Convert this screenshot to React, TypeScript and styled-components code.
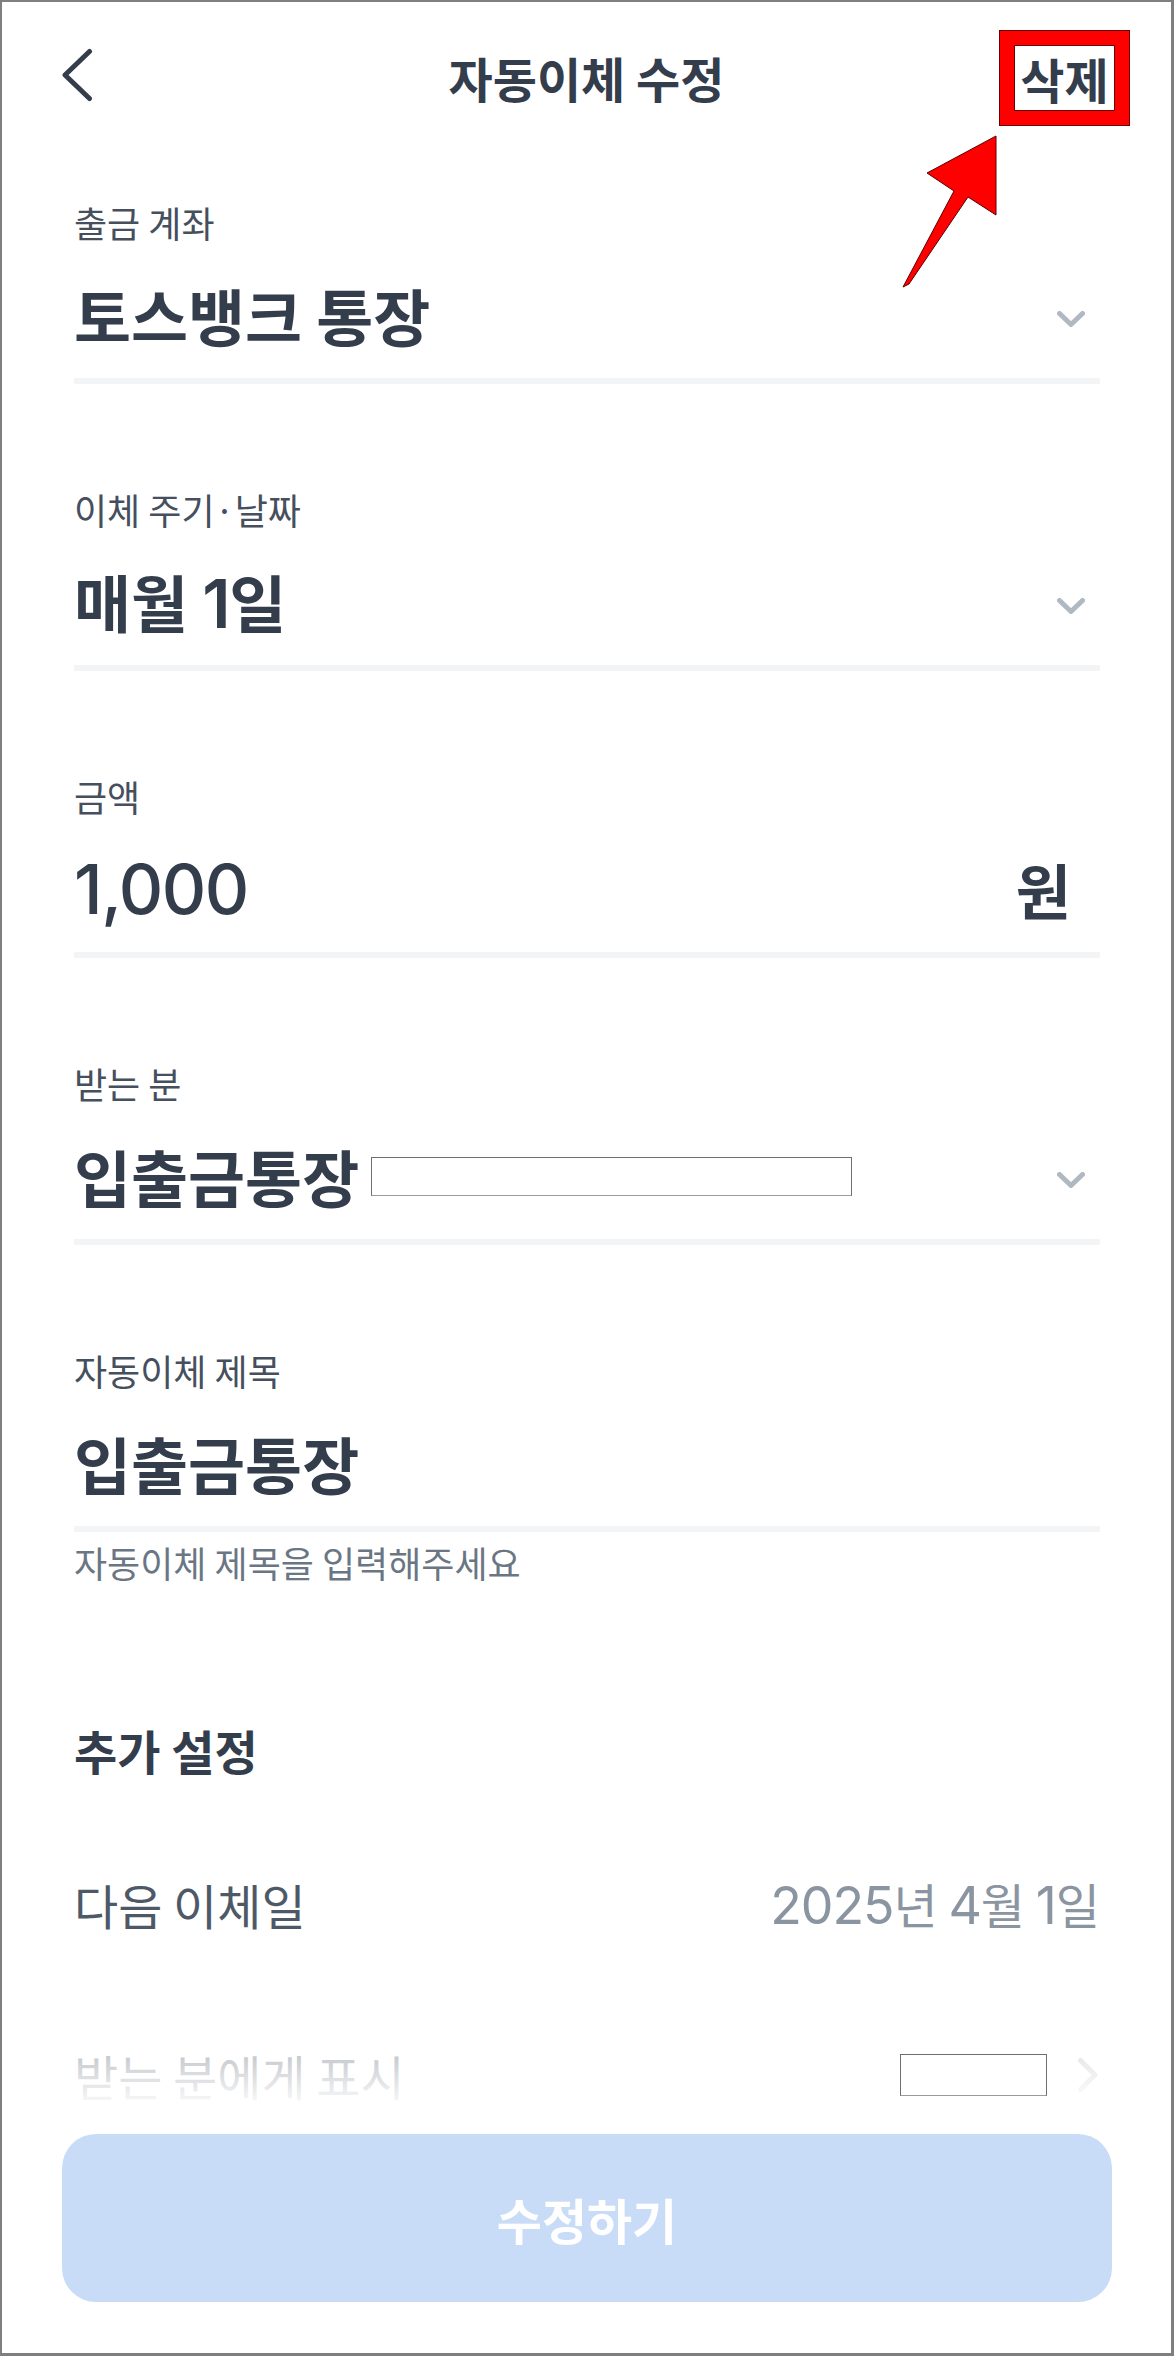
import styled, { createGlobalStyle } from 'styled-components';

const GlobalStyle = createGlobalStyle`
  html, body {
    margin: 0;
    padding: 0;
    background: #fff;
  }
  body {
    font-family: 'Noto Sans CJK KR', 'Noto Sans', sans-serif;
    color: #333d4b;
  }
  * {
    box-sizing: border-box;
  }
`;

const Screen = styled.div`
  position: relative;
  width: 1174px;
  height: 2356px;
  border-style: solid;
  border-color: #7f7f7f;
  border-width: 2px 3px 3px 2px;
  background: #fff;
  overflow: hidden;
  display: flex;
  flex-direction: column;
`;

const Header = styled.header`
  position: relative;
  height: 150px;
  flex-shrink: 0;
  display: grid;
  grid-template-columns: 1fr auto 1fr;
  align-items: center;
  padding: 0 42px;
`;

const BackButton = styled.button`
  justify-self: start;
  display: flex;
  margin-left: 17px;
  padding: 0;
  border: none;
  background: none;
  color: #333d4b;
`;

const Title = styled.h1`
  margin: 0;
  font-size: 48px;
  font-weight: 600;
  line-height: 60px;
  color: #333d4b;
`;

const DeleteButton = styled.button`
  justify-self: end;
  width: 129px;
  height: 94px;
  margin-top: 2px;
  padding: 0;
  background: #fff;
  border: 14px solid #ff0000;
  box-shadow: 0 0 0 1px #6a0000, inset 0 0 0 1px #6a0000;
  font-family: inherit;
  font-size: 48px;
  font-weight: 600;
  line-height: 1;
  color: #333d4b;
  white-space: nowrap;
`;

const Arrow = styled.svg`
  position: absolute;
  left: 893px;
  top: 126px;
  z-index: 3;
  pointer-events: none;
`;

const Form = styled.main`
  display: flex;
  flex-direction: column;
  gap: 101px;
  padding: 46px 71px 0 72px;
`;

const Field = styled.section`
  display: flex;
  flex-direction: column;
`;

const FieldLabel = styled.div`
  height: 48px;
  font-size: 36px;
  line-height: 48px;
  color: #454f5d;
`;

const ValueRow = styled.div`
  margin-top: 21px;
  height: 96px;
  display: flex;
  align-items: center;
  gap: 12px;
`;

const ValueText = styled.span`
  font-size: 62px;
  font-weight: 700;
  line-height: 96px;
  color: #333d4b;
  white-space: nowrap;
`;

const Num = styled.span<{ $weight?: number }>`
  font-family: Inter, 'Noto Sans', sans-serif;
  font-size: 1.08em;
  font-weight: ${(p) => p.$weight ?? 'inherit'};
  letter-spacing: -0.02em;
`;

const Amount = styled.span`
  font-family: Inter, 'Noto Sans', sans-serif;
  font-size: 69px;
  font-weight: 500;
  line-height: 96px;
  color: #333d4b;
  letter-spacing: -1.5px;
`;

const Unit = styled.span`
  margin-left: auto;
  margin-right: 29px;
  font-size: 60px;
  font-weight: 700;
  line-height: 96px;
  color: #333d4b;
`;

const DropIcon = styled.svg`
  margin-left: auto;
  margin-right: 15px;
  margin-top: 8px;
  flex-shrink: 0;
`;

const MaskBox = styled.span<{ $w: number; $h: number }>`
  position: relative;
  z-index: 2;
  display: block;
  flex-shrink: 0;
  width: ${(p) => p.$w}px;
  height: ${(p) => p.$h}px;
  background: #fff;
  border: 1.5px solid #6f6f6f;
  border-bottom-color: #9a9a9a;
`;

const Divider = styled.div`
  margin-top: 15px;
  height: 6px;
  background: #f2f4f6;
`;

const Hint = styled.div`
  margin-top: 10px;
  font-size: 36px;
  line-height: 40px;
  color: #6b7684;
`;

const Extra = styled.section`
  padding: 140px 71px 0 72px;
`;

const SectionTitle = styled.h2`
  margin: 0;
  font-size: 47px;
  font-weight: 700;
  line-height: 56px;
  color: #333d4b;
`;

const SettingList = styled.div`
  margin-top: 98px;
  display: flex;
  flex-direction: column;
  gap: 115px;
`;

const SettingRow = styled.div`
  height: 56px;
  display: flex;
  align-items: center;
  justify-content: space-between;
`;

const SettingName = styled.span`
  font-size: 48px;
  line-height: 56px;
  color: #4e5968;
  white-space: nowrap;
`;

const SettingValue = styled.span`
  font-size: 48px;
  line-height: 56px;
  color: #8b95a1;
  white-space: nowrap;
`;

const SettingAside = styled.div`
  display: flex;
  align-items: center;
  gap: 31px;
  margin-right: 2px;
`;

const BottomBar = styled.footer`
  position: relative;
  padding: 31px 59px 0 60px;

  &::before {
    content: '';
    position: absolute;
    left: 0;
    right: 0;
    top: -163px;
    height: 170px;
    z-index: 1;
    background: linear-gradient(rgba(255, 255, 255, 0), #fff);
    pointer-events: none;
  }
`;

const SubmitButton = styled.button`
  width: 100%;
  height: 168px;
  border: none;
  border-radius: 34px;
  background: #c9dcf7;
  color: #fff;
  font-family: inherit;
  font-size: 49px;
  font-weight: 600;
`;

const ChevronDown = () => (
  <DropIcon width="28" height="16" viewBox="0 0 28 16">
    <polyline
      points="2.5,2.5 14,13.5 25.5,2.5"
      fill="none"
      stroke="#b0b8c1"
      strokeWidth="5"
      strokeLinecap="round"
      strokeLinejoin="round"
    />
  </DropIcon>
);

const ChevronRight = () => (
  <svg width="20" height="34" viewBox="0 0 20 34">
    <polyline
      points="2.5,2.5 17,17 2.5,31.5"
      fill="none"
      stroke="#b0b8c1"
      strokeWidth="5"
      strokeLinecap="round"
      strokeLinejoin="round"
    />
  </svg>
);

export default function App() {
  return (
    <>
      <GlobalStyle />
      <Screen>
        <Header>
          <BackButton aria-label="뒤로">
            <svg width="34" height="58" viewBox="0 0 34 58">
              <polyline
                points="28.5,3.5 4,27 28.5,50.5"
                fill="none"
                stroke="currentColor"
                strokeWidth="5"
                strokeLinecap="round"
                strokeLinejoin="round"
              />
            </svg>
          </BackButton>
          <Title>자동이체 수정</Title>
          <DeleteButton>삭제</DeleteButton>
          <Arrow width="106" height="162" viewBox="0 0 106 162">
            <polygon
              points="101,8 32,45 59,63 8,159 14,156 73,69 101,87"
              fill="#ff0000"
              stroke="#5a0000"
              strokeWidth="1"
              strokeLinejoin="miter"
            />
          </Arrow>
        </Header>

        <Form>
          <Field>
            <FieldLabel>출금 계좌</FieldLabel>
            <ValueRow>
              <ValueText>토스뱅크 통장</ValueText>
              <ChevronDown />
            </ValueRow>
            <Divider />
          </Field>

          <Field>
            <FieldLabel>이체 주기·날짜</FieldLabel>
            <ValueRow>
              <ValueText>
                매월 <Num $weight={600}>1</Num>일
              </ValueText>
              <ChevronDown />
            </ValueRow>
            <Divider />
          </Field>

          <Field>
            <FieldLabel>금액</FieldLabel>
            <ValueRow>
              <Amount>1,000</Amount>
              <Unit>원</Unit>
            </ValueRow>
            <Divider />
          </Field>

          <Field>
            <FieldLabel>받는 분</FieldLabel>
            <ValueRow>
              <ValueText>입출금통장</ValueText>
              <MaskBox $w={481} $h={39} />
              <ChevronDown />
            </ValueRow>
            <Divider />
          </Field>

          <Field>
            <FieldLabel>자동이체 제목</FieldLabel>
            <ValueRow>
              <ValueText>입출금통장</ValueText>
            </ValueRow>
            <Divider />
            <Hint>자동이체 제목을 입력해주세요</Hint>
          </Field>
        </Form>

        <Extra>
          <SectionTitle>추가 설정</SectionTitle>
          <SettingList>
            <SettingRow>
              <SettingName>다음 이체일</SettingName>
              <SettingValue>
                <Num>2025</Num>년 <Num>4</Num>월 <Num>1</Num>일
              </SettingValue>
            </SettingRow>
            <SettingRow>
              <SettingName>받는 분에게 표시</SettingName>
              <SettingAside>
                <MaskBox $w={147} $h={42} />
                <ChevronRight />
              </SettingAside>
            </SettingRow>
          </SettingList>
        </Extra>

        <BottomBar>
          <SubmitButton>수정하기</SubmitButton>
        </BottomBar>
      </Screen>
    </>
  );
}
